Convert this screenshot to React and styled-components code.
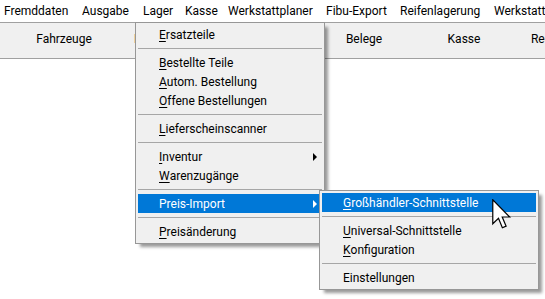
import styled, { createGlobalStyle } from 'styled-components'

const GlobalStyle = createGlobalStyle`
  html, body { margin: 0; padding: 0; background: #ffffff; }
  body {
    font-family: Roboto, "Liberation Sans", sans-serif;
    font-size: 12px;
    color: #000000;
  }
  * { box-sizing: border-box; }
`

const menuBarItems = [
  { label: 'Fremddaten', width: 78 },
  { label: 'Ausgabe', width: 61 },
  { label: 'Lager', width: 42 },
  { label: 'Kasse', width: 43 },
  { label: 'Werkstattplaner', width: 98 },
  { label: 'Fibu-Export', width: 74 },
  { label: 'Reifenlagerung', width: 94 },
  { label: 'Werkstattauftrag', width: 60 },
]

const toolButtons = ['Fahrzeuge', 'Lieferanten', 'Artikel', 'Belege', 'Kasse', 'Rechnungen']

const lagerMenu = [
  { label: '&Ersatzteile' },
  { sep: true },
  { label: '&Bestellte Teile' },
  { label: '&Autom. Bestellung' },
  { label: '&Offene Bestellungen' },
  { sep: true },
  { label: '&Lieferscheinscanner' },
  { sep: true },
  { label: '&Inventur', sub: true },
  { label: '&Warenzugänge' },
  { sep: true },
  { label: 'Preis-Import', sub: true, active: true },
  { sep: true },
  { label: '&Preisänderung' },
]

const importMenu = [
  { label: '&Großhändler-Schnittstelle', active: true },
  { sep: true },
  { label: '&Universal-Schnittstelle' },
  { label: '&Konfiguration' },
  { sep: true },
  { label: 'Einstellungen' },
]

const Label = ({ text }) => {
  const i = text.indexOf('&')
  if (i < 0) return text
  return (
    <>
      {text.slice(0, i)}
      <u>{text[i + 1]}</u>
      {text.slice(i + 2)}
    </>
  )
}

const Menu = ({ items, top, left, width }) => (
  <Dropdown $top={top} $left={left} $width={width}>
    {items.map((item, i) =>
      item.sep ? (
        <Separator key={i} />
      ) : (
        <Item key={i} $active={item.active}>
          <Label text={item.label} />
          {item.sub && <SubArrow />}
        </Item>
      )
    )}
  </Dropdown>
)

const Cursor = () => (
  <CursorWrap>
    <svg width='20' height='30' viewBox='0 0 13.3 20'>
      <path
        d='M0.5 0.5 L0.5 16.5 L4.3 12.9 L6.9 19.2 L9.4 18.1 L6.8 12 L11.8 12 Z'
        fill='#ffffff'
        stroke='#000000'
        strokeWidth='0.8'
        strokeLinejoin='miter'
      />
    </svg>
  </CursorWrap>
)

const App = () => (
  <Window>
    <GlobalStyle />
    <MenuBar>
      {menuBarItems.map((m) => (
        <MenuBarItem key={m.label} $width={m.width}>
          {m.label}
        </MenuBarItem>
      ))}
    </MenuBar>
    <Toolbar>
      {toolButtons.map((b) => (
        <ToolButton key={b}>{b}</ToolButton>
      ))}
    </Toolbar>
    <Menu items={lagerMenu} top={22} left={135} width={190} />
    <Menu items={importMenu} top={190} left={319} width={220} />
    <Cursor />
  </Window>
)

export default App

const Window = styled.div`
  position: relative;
  width: 545px;
  height: 299px;
  overflow: hidden;
  background: #ffffff;
`

const MenuBar = styled.div`
  display: flex;
  height: 22px;
  padding-left: 4px;
  background: #ffffff;
  white-space: nowrap;
  overflow: hidden;
`

const MenuBarItem = styled.div`
  flex: 0 0 auto;
  width: ${(p) => p.$width}px;
  line-height: 22px;
  padding-bottom: 1px;
`

const Toolbar = styled.div`
  display: flex;
  height: 37px;
  padding-left: 14px;
  background: #f0f0f0;
  border-top: 1px solid #a0a0a0;
  border-bottom: 1px solid #a0a0a0;
  white-space: nowrap;
  overflow: hidden;
`

const ToolButton = styled.div`
  flex: 0 0 100px;
  display: flex;
  align-items: center;
  justify-content: center;
  padding-bottom: 3px;
`

const Dropdown = styled.div`
  position: absolute;
  top: ${(p) => p.$top}px;
  left: ${(p) => p.$left}px;
  width: ${(p) => p.$width}px;
  padding: 2px;
  background: #f0f0f0;
  border: 1px solid #979797;
  box-shadow: 4px 4px 3px -1px rgba(0, 0, 0, 0.4);
`

const Item = styled.div`
  display: flex;
  align-items: center;
  height: 19px;
  padding: 0 5px 0 21px;
  white-space: nowrap;
  background: ${(p) => (p.$active ? '#0078d7' : 'transparent')};
  color: ${(p) => (p.$active ? '#ffffff' : '#000000')};

  u {
    text-underline-offset: 2px;
  }
`

const SubArrow = styled.span`
  margin-left: auto;
  width: 0;
  height: 0;
  border-left: 4px solid currentColor;
  border-top: 4px solid transparent;
  border-bottom: 4px solid transparent;
`

const Separator = styled.div`
  height: 1px;
  margin: 4px 0;
  background: #a6a6a6;
`

const CursorWrap = styled.div`
  position: absolute;
  left: 492px;
  top: 199px;
  line-height: 0;
`
